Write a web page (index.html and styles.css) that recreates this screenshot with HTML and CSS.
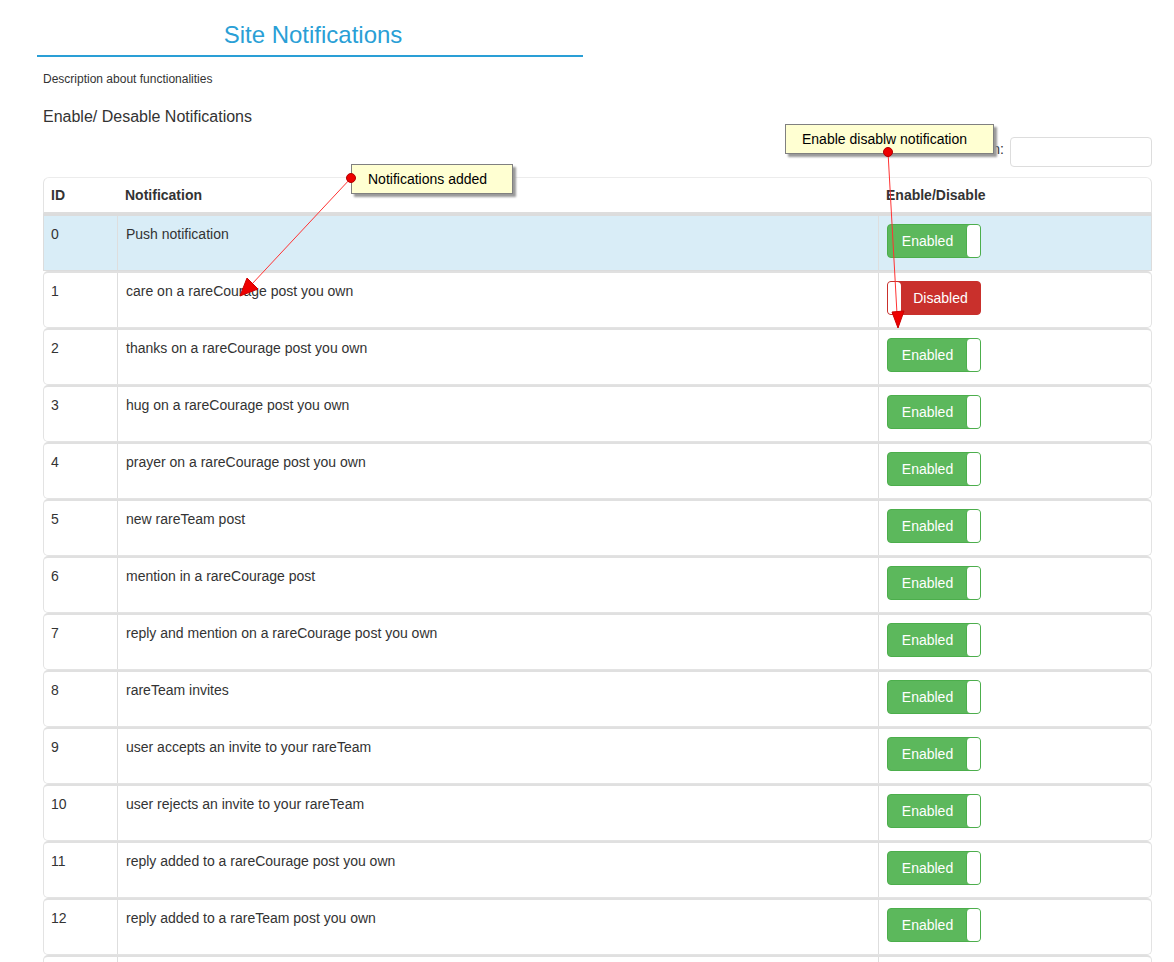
FILE: index.html
```html
<!DOCTYPE html>
<html>
<head>
<meta charset="utf-8">
<link rel="stylesheet" href="styles.css">
</head>
<body>
<div class="page">
  <div class="title-wrap">
    <h1 class="title">Site Notifications</h1>
  </div>
  <p class="desc">Description about functionalities</p>
  <h2 class="subtitle">Enable/ Desable Notifications</h2>
  <div class="search-row">
    <label class="search-label">Search:</label>
    <input class="search-input" type="text">
  </div>
  <div class="table">
    <div class="row head">
      <div class="cell c-id">ID</div>
      <div class="cell c-name">Notification</div>
      <div class="cell c-tog">Enable/Disable</div>
    </div>
    <div class="row active">
      <div class="cell c-id">0</div>
      <div class="cell c-name">Push notification</div>
      <div class="cell c-tog"><span class="toggle on"><span class="lbl">Enabled</span><span class="knob"></span></span></div>
    </div>
    <div class="row">
      <div class="cell c-id">1</div>
      <div class="cell c-name">care on a rareCourage post you own</div>
      <div class="cell c-tog"><span class="toggle off"><span class="knob"></span><span class="lbl">Disabled</span></span></div>
    </div>
    <div class="row">
      <div class="cell c-id">2</div>
      <div class="cell c-name">thanks on a rareCourage post you own</div>
      <div class="cell c-tog"><span class="toggle on"><span class="lbl">Enabled</span><span class="knob"></span></span></div>
    </div>
    <div class="row">
      <div class="cell c-id">3</div>
      <div class="cell c-name">hug on a rareCourage post you own</div>
      <div class="cell c-tog"><span class="toggle on"><span class="lbl">Enabled</span><span class="knob"></span></span></div>
    </div>
    <div class="row">
      <div class="cell c-id">4</div>
      <div class="cell c-name">prayer on a rareCourage post you own</div>
      <div class="cell c-tog"><span class="toggle on"><span class="lbl">Enabled</span><span class="knob"></span></span></div>
    </div>
    <div class="row">
      <div class="cell c-id">5</div>
      <div class="cell c-name">new rareTeam post</div>
      <div class="cell c-tog"><span class="toggle on"><span class="lbl">Enabled</span><span class="knob"></span></span></div>
    </div>
    <div class="row">
      <div class="cell c-id">6</div>
      <div class="cell c-name">mention in a rareCourage post</div>
      <div class="cell c-tog"><span class="toggle on"><span class="lbl">Enabled</span><span class="knob"></span></span></div>
    </div>
    <div class="row">
      <div class="cell c-id">7</div>
      <div class="cell c-name">reply and mention on a rareCourage post you own</div>
      <div class="cell c-tog"><span class="toggle on"><span class="lbl">Enabled</span><span class="knob"></span></span></div>
    </div>
    <div class="row">
      <div class="cell c-id">8</div>
      <div class="cell c-name">rareTeam invites</div>
      <div class="cell c-tog"><span class="toggle on"><span class="lbl">Enabled</span><span class="knob"></span></span></div>
    </div>
    <div class="row">
      <div class="cell c-id">9</div>
      <div class="cell c-name">user accepts an invite to your rareTeam</div>
      <div class="cell c-tog"><span class="toggle on"><span class="lbl">Enabled</span><span class="knob"></span></span></div>
    </div>
    <div class="row">
      <div class="cell c-id">10</div>
      <div class="cell c-name">user rejects an invite to your rareTeam</div>
      <div class="cell c-tog"><span class="toggle on"><span class="lbl">Enabled</span><span class="knob"></span></span></div>
    </div>
    <div class="row">
      <div class="cell c-id">11</div>
      <div class="cell c-name">reply added to a rareCourage post you own</div>
      <div class="cell c-tog"><span class="toggle on"><span class="lbl">Enabled</span><span class="knob"></span></span></div>
    </div>
    <div class="row">
      <div class="cell c-id">12</div>
      <div class="cell c-name">reply added to a rareTeam post you own</div>
      <div class="cell c-tog"><span class="toggle on"><span class="lbl">Enabled</span><span class="knob"></span></span></div>
    </div>
    <div class="row last">
      <div class="cell c-id"></div>
      <div class="cell c-name"></div>
      <div class="cell c-tog"></div>
    </div>
  </div>
</div>

<div class="callout callout-a">Notifications added</div>
<div class="callout callout-b">Enable disablw notification</div>

<svg class="arrows" width="1174" height="962" viewBox="0 0 1174 962">
  <line x1="351" y1="178" x2="252" y2="284" stroke="#ff3333" stroke-width="1"/>
  <polygon points="240,296 247,278 258,289" fill="#ee0000" stroke="#cc0000" stroke-width="1"/>
  <circle cx="351" cy="178" r="4.5" fill="#ee0000" stroke="#b00000" stroke-width="1"/>
  <line x1="888" y1="152" x2="897" y2="314" stroke="#ff3333" stroke-width="1"/>
  <polygon points="898,328 892,312 904,311" fill="#ee0000" stroke="#cc0000" stroke-width="1"/>
  <circle cx="888" cy="152" r="4.5" fill="#ee0000" stroke="#b00000" stroke-width="1"/>
</svg>
</body>
</html>
```
FILE: styles.css
```css
html, body {
  margin: 0;
  padding: 0;
  background: #fff;
}
body {
  font-family: "Liberation Sans", Arial, sans-serif;
  color: #333;
  font-size: 14px;
  position: relative;
  overflow: hidden;
  height: 962px;
}
.page {
  padding: 0 22px 0 43px;
}
.title-wrap {
  width: 546px;
  margin-left: -6px;
  border-bottom: 2px solid #2a9fd6;
  padding-top: 20px;
  height: 35px;
}
.title {
  margin: 0;
  padding-left: 6px;
  text-align: center;
  font-weight: normal;
  font-size: 24px;
  line-height: 29px;
  color: #2a9fd6;
}
.desc {
  margin: 14px 0 0 0;
  font-size: 12px;
  line-height: 16px;
}
.subtitle {
  margin: 20px 0 0 0;
  font-weight: normal;
  font-size: 16px;
  line-height: 20px;
}
.search-row {
  display: flex;
  justify-content: flex-end;
  align-items: flex-start;
  gap: 6px;
  margin-top: 10px;
  height: 30px;
}
.search-label {
  font-size: 14px;
  line-height: 20px;
  padding-top: 2px;
  color: #333;
}
.search-input {
  width: 142px;
  height: 30px;
  box-sizing: border-box;
  border: 1px solid #ddd;
  border-radius: 4px;
  margin: 0;
  padding: 0 6px;
}
.table {
  margin-top: 10px;
  display: flex;
  flex-direction: column;
}
.row {
  display: grid;
  grid-template-columns: 73px 761px 1fr;
  border: 1px solid #e3e3e3;
  border-top: 2px solid #e0e0e0;
  border-radius: 5px;
  height: 57px;
  box-sizing: border-box;
}
.row.head {
  height: 37px;
  border-top: 1px solid #ececec;
  border-bottom: 2px solid #dddddd;
  border-radius: 6px 6px 0 0;
}
.row.head .cell {
  font-weight: bold;
  border-left: none;
  padding-top: 7px;
}
.row.active {
  background: #d9edf7;
  border-radius: 0;
  border-color: #dcdcdc;
}
.cell {
  padding: 8px 8px 0 8px;
  line-height: 20px;
  color: #333;
}
.c-id {
  padding-left: 7px;
}
.c-name, .c-tog {
  border-left: 1px solid #dedede;
}
.c-name {
  padding-left: 8px;
}
.c-tog {
  padding-top: 8px;
}
.toggle {
  display: inline-flex;
  width: 94px;
  height: 34px;
  box-sizing: border-box;
  border-radius: 4px;
  overflow: hidden;
  vertical-align: top;
}
.toggle .lbl {
  flex: 1;
  display: flex;
  align-items: center;
  justify-content: center;
  color: #fff;
  font-size: 14px;
}
.toggle .knob {
  width: 13px;
  background: #fff;
}
.toggle.on {
  background: #5cb85c;
  border: 1px solid #4cae4c;
}
.toggle.on .knob {
  border-radius: 4px 0 0 4px;
  border-left: 1px solid #4cae4c;
}
.toggle.on .lbl {
  padding-left: 1px;
}
.toggle.off {
  background: #c9302c;
  border: 1px solid #c9302c;
}
.toggle.off .knob {
  border-radius: 0 4px 4px 0;
}
.callout {
  position: absolute;
  background: #ffffd2;
  border: 1px solid #808080;
  box-shadow: 3px 3px 2px #9a9a9a;
  color: #000;
  font-size: 14px;
  line-height: 28px;
  height: 28px;
  padding: 0 0 0 16px;
  box-sizing: content-box;
}
.callout-a {
  left: 351px;
  top: 164px;
  width: 144px;
}
.callout-b {
  left: 785px;
  top: 124px;
  width: 191px;
}
.arrows {
  position: absolute;
  left: 0;
  top: 0;
  pointer-events: none;
}
```
